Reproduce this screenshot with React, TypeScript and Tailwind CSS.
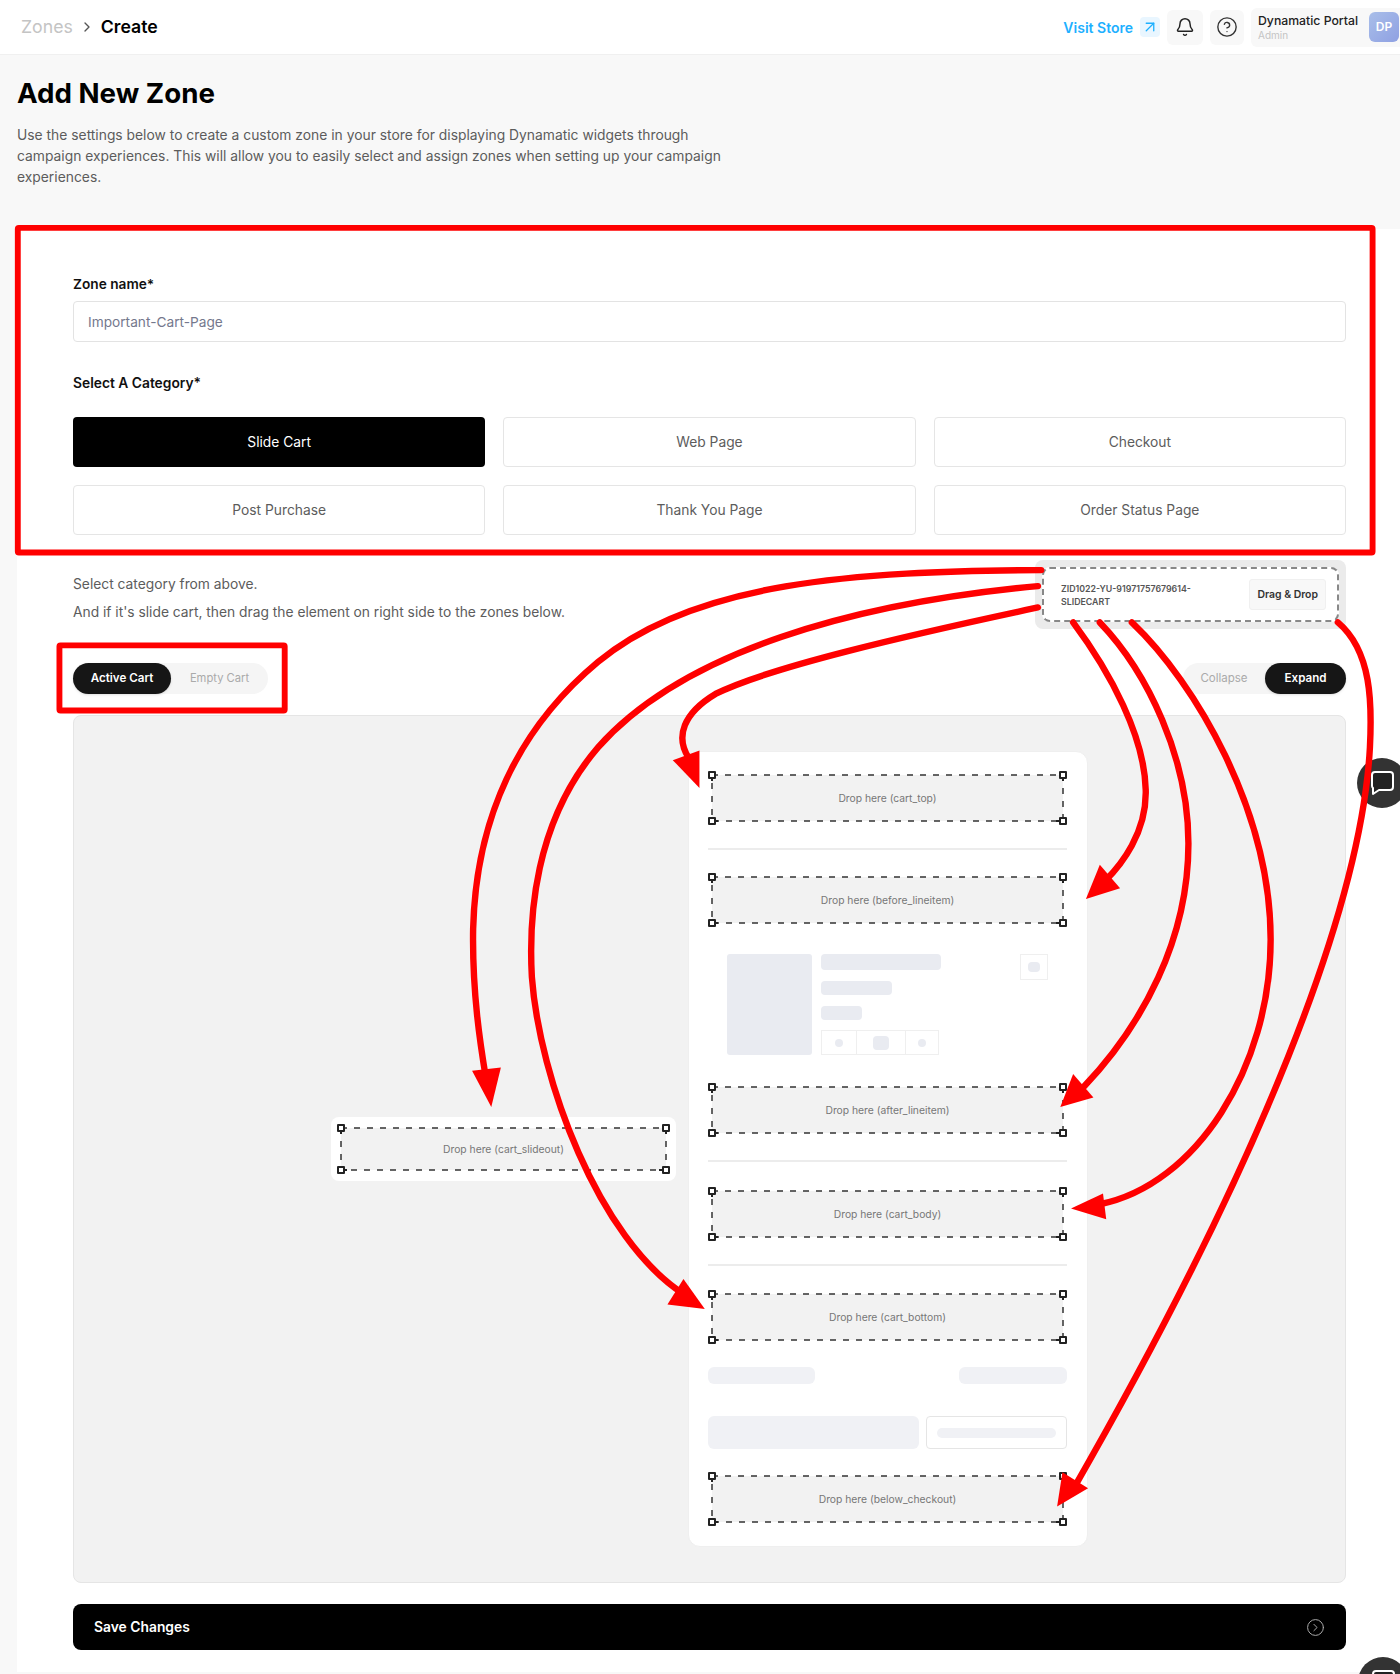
import React from "react";
import { ArrowUpRight, Bell, ChevronRight, CircleChevronRight, CircleHelp } from "lucide-react";

function Handle({ className, tail }: { className: string; tail: string }) {
  return (
    <span className={`absolute w-[8px] h-[8px] border-2 border-[#222] bg-white rounded-[1px] ${className}`}>
      <span className={`absolute bg-[#222] ${tail}`}></span>
    </span>
  );
}

function DropZone({ name, height = "h-[46px]" }: { name: string; height?: string }) {
  return (
    <div className={`relative ${height} mx-1 bg-[#f2f2f2] flex items-center justify-center text-[10.3px] text-[#777]`}>
      <svg className="absolute inset-0 w-full h-full overflow-visible" fill="none">
        <rect x="0" y="0" width="100%" height="100%" stroke="#333" strokeWidth="1.5" strokeDasharray="6 7" />
      </svg>
      <Handle className="-top-[4px] -left-[4px]" tail="top-[4px] left-[1px] w-[1.5px] h-[4px]" />
      <Handle className="-top-[4px] -right-[4px]" tail="top-[4px] left-[1px] w-[1.5px] h-[4px]" />
      <Handle className="-bottom-[4px] -left-[4px]" tail="top-[1px] left-[4px] w-[4px] h-[1.5px]" />
      <Handle className="-bottom-[4px] -right-[4px]" tail="top-[1px] -left-[5px] w-[4px] h-[1.5px]" />
      <span className="relative">Drop here ({name})</span>
    </div>
  );
}

function Divider({ className }: { className: string }) {
  return <div className={`h-[2px] bg-[#ececec] ${className}`}></div>;
}

function CategoryButton({ label, active }: { label: string; active?: boolean }) {
  return (
    <button className={`h-[50px] rounded-[4px] text-[13.8px] ${active ? "bg-black text-white" : "bg-white text-[#5c5c5c] border border-[#e5e5e5]"}`}>
      {label}
    </button>
  );
}

function ChatBubble({ className }: { className: string }) {
  return (
    <div className={`absolute w-[50px] h-[50px] rounded-full bg-[#333] flex items-center justify-center ${className}`}>
      <svg width="26" height="26" viewBox="0 0 26 26" fill="#222" stroke="white" strokeWidth="2" strokeLinejoin="round">
        <path d="M6 2h15a3 3 0 0 1 3 3v12a3 3 0 0 1-3 3H10l-6 4 0-6a3 3 0 0 1-1-2V5a3 3 0 0 1 3-3z" />
      </svg>
    </div>
  );
}

function Annotations() {
  const line = { fill: "none", stroke: "#ff0000", strokeWidth: 6, strokeLinecap: "round" as const };
  return (
    <svg className="absolute top-0 left-0 w-[1400px] h-[1674px] pointer-events-none" viewBox="0 0 1311 1568">
      <rect x="16.5" y="213.5" width="1269" height="304" rx="1" fill="none" stroke="#ff0000" strokeWidth="5.5" />
      <rect x="55.5" y="604.5" width="211" height="61" rx="1" fill="none" stroke="#ff0000" strokeWidth="5.5" />
      <path {...line} d="M975 534C800 535 650 545 560 620C470 695 445 790 443 870C442 930 450 980 455 1010" />
      <polygon fill="#ff0000" points="460,1037 442,1003 469,1000" />
      <path {...line} d="M972 549C800 565 640 610 560 700C500 770 495 860 498 915C505 1010 560 1160 640 1212" />
      <polygon fill="#ff0000" points="660,1226 625,1222 640,1198" />
      <path {...line} d="M972 569C850 595 720 625 670 650C640 668 632 690 645 710" />
      <polygon fill="#ff0000" points="655,738 630,712 655,703" />
      <path {...line} d="M1005 583C1040 630 1072 690 1073 740C1074 780 1050 810 1035 825" />
      <polygon fill="#ff0000" points="1017,842 1030,810 1049,832" />
      <path {...line} d="M1030 583C1075 630 1113 710 1113 790C1113 880 1070 960 1015 1018" />
      <polygon fill="#ff0000" points="993,1037 1005,1006 1024,1028" />
      <path {...line} d="M1060 583C1120 640 1190 760 1190 880C1190 1000 1120 1110 1030 1128" />
      <polygon fill="#ff0000" points="1003,1132 1033,1118 1036,1142" />
      <path {...line} d="M1253 583C1285 610 1285 660 1283 700C1275 850 1180 1090 1005 1395" />
      <polygon fill="#ff0000" points="990,1411 995,1379 1019,1394" />
    </svg>
  );
}

export default function App() {
  return (
    <div className="relative h-[1674px] overflow-hidden bg-[#f8f8f8] font-['Inter',sans-serif]">
      <header className="h-[55px] bg-white border-b border-[#f0f0f0] flex items-center justify-between pl-[21px]">
        <div className="flex items-center text-[17.7px]">
          <span className="text-[#c4c4c4]">Zones</span>
          <ChevronRight className="w-4 h-4 mx-[6px] text-[#555]" />
          <span className="font-semibold text-black">Create</span>
        </div>
        <div className="flex items-center">
          <span className="text-[14px] font-semibold text-[#1eb0ff]">Visit Store</span>
          <div className="ml-[7px] w-5 h-5 rounded-[4px] bg-[#e9f6ff] flex items-center justify-center">
            <ArrowUpRight className="w-[18px] h-[18px] text-[#1eb0ff]" strokeWidth={1.75} />
          </div>
          <div className="ml-[7px] w-9 h-[35px] rounded-md bg-[#f8f8f8] flex items-center justify-center">
            <Bell className="w-5 h-5 text-[#222]" strokeWidth={1.75} />
          </div>
          <div className="ml-[7px] w-[34px] h-[35px] rounded-md bg-[#f8f8f8] flex items-center justify-center">
            <CircleHelp className="w-[22px] h-[22px] text-[#333]" strokeWidth={1.5} />
          </div>
          <div className="ml-[7px] w-[149px] h-[39px] rounded-l-md bg-[#f8f8f8] flex items-center pl-[7px]">
            <div className="w-[111px]">
              <div className="text-[12.25px] leading-4 font-medium text-[#222]">Dynamatic Portal</div>
              <div className="text-[10px] leading-3 text-[#c4c4c4]">Admin</div>
            </div>
            <div className="w-[30px] h-[30px] rounded-md bg-gradient-to-br from-[#a9bee9] to-[#8fa0e2] flex items-center justify-center text-[12px] font-semibold text-white">DP</div>
          </div>
        </div>
      </header>

      <section className="pl-[17px] pt-[20px]">
        <h1 className="text-[27.7px] leading-9 font-bold text-black">Add New Zone</h1>
        <p className="mt-[14px] w-[720px] text-[13.85px] leading-[20.8px] text-[#5c5c5c]">
          Use the settings below to create a custom zone in your store for displaying Dynamatic widgets through campaign experiences. This will allow you to easily select and assign zones when setting up your campaign experiences.
        </p>
      </section>

      <main className="ml-[17px] mt-[42px] bg-white pt-[46px] pl-[56px] pr-[54px] pb-[22px] rounded-tl-lg">
        <label className="block text-[13.7px] leading-[18px] font-semibold text-[#111]">Zone name*</label>
        <div className="mt-[8px] h-[41px] rounded-[4px] border border-[#e3e3e3] flex items-center px-[14px] text-[13.7px] text-[#74788d]">Important-Cart-Page</div>
        <label className="block mt-[32px] text-[13.8px] leading-[18px] font-semibold text-[#111]">Select A Category*</label>
        <div className="mt-[25px] grid grid-cols-3 gap-x-[18px] gap-y-[18px]">
          <CategoryButton label="Slide Cart" active />
          <CategoryButton label="Web Page" />
          <CategoryButton label="Checkout" />
          <CategoryButton label="Post Purchase" />
          <CategoryButton label="Thank You Page" />
          <CategoryButton label="Order Status Page" />
        </div>

        <div className="mt-[25px] flex items-start justify-between">
          <div className="pt-[14px] text-[13.8px] leading-5 text-[#5c5c5c]">
            <p>Select category from above.</p>
            <p className="mt-2">And if it's slide cart, then drag the element on right side to the zones below.</p>
          </div>
          <div className="w-[311px] h-[69px] rounded-lg bg-[#ebebeb] p-[7px]">
            <div className="h-full rounded-lg border-2 border-dashed border-[#888] bg-white flex items-center justify-between pl-[17px] pr-[11px]">
              <span className="w-[160px] text-[8.8px] leading-[13px] font-semibold text-[#555]">ZID1022-YU-91971757679614-SLIDECART</span>
              <span className="h-[31px] px-[7px] rounded-[3px] bg-[#f8f8f8] border border-[#f0f0f0] flex items-center text-[10.45px] font-semibold text-[#333]">Drag &amp; Drop</span>
            </div>
          </div>
        </div>

        <div className="mt-[34px] flex items-center justify-between">
          <div className="flex w-[195px] h-[31px] rounded-full bg-[#f5f5f5]">
            <span className="w-[98px] rounded-full bg-[#161616] text-[11.6px] text-white font-semibold flex items-center justify-center shadow">Active Cart</span>
            <span className="flex-1 flex items-center justify-center text-[11.2px] text-[#aaa]">Empty Cart</span>
          </div>
          <div className="flex w-[163px] h-[31px] rounded-full bg-[#f5f5f5]">
            <span className="flex-1 flex items-center justify-center text-[11.5px] text-[#aaa]">Collapse</span>
            <span className="w-[81px] rounded-full bg-[#161616] text-[11.6px] text-white font-semibold flex items-center justify-center shadow">Expand</span>
          </div>
        </div>

        <div className="mt-[21px] rounded-lg border border-[#e5e5e5] bg-[#f2f2f2] py-[35px] flex items-center justify-center gap-3">
          <div className="w-[345px] h-[64px] rounded-lg bg-white flex flex-col justify-center px-[6px]">
            <DropZone name="cart_slideout" height="h-[42px]" />
          </div>

          <div className="w-[400px] rounded-xl bg-white border border-[#efefef] pl-[19px] pr-[20px] pt-[23px] pb-[24px]">
            <DropZone name="cart_top" />
            <Divider className="mt-[27px]" />
            <div className="mt-[27px]"><DropZone name="before_lineitem" /></div>
            <div className="mt-[31px] pl-[19px] pr-[19px] flex justify-between">
              <div className="flex gap-[9px]">
                <div className="w-[85px] h-[101px] rounded-[3px] bg-[#e9ebf1]"></div>
                <div>
                  <div className="w-[120px] h-[16px] rounded-[4px] bg-[#e9ebf1]"></div>
                  <div className="mt-[11px] w-[71px] h-[14px] rounded-[4px] bg-[#e9ebf1]"></div>
                  <div className="mt-[11px] w-[41px] h-[14px] rounded-[4px] bg-[#e9ebf1]"></div>
                  <div className="mt-[10px] w-[118px] h-[25px] border border-[#efefef] flex">
                    <div className="w-[34px] flex items-center justify-center"><span className="w-2 h-2 rounded-full bg-[#e9ebf1]"></span></div>
                    <div className="w-[50px] border-x border-[#efefef] flex items-center justify-center"><span className="w-4 h-[14px] rounded-[4px] bg-[#e9ebf1]"></span></div>
                    <div className="flex-1 flex items-center justify-center"><span className="w-2 h-2 rounded-full bg-[#e9ebf1]"></span></div>
                  </div>
                </div>
              </div>
              <div className="w-[28px] h-[26px] border border-[#efefef] flex items-center justify-center">
                <span className="w-3 h-[10px] rounded-[4px] bg-[#e9ebf1]"></span>
              </div>
            </div>
            <div className="mt-[32px]"><DropZone name="after_lineitem" /></div>
            <Divider className="mt-[27px]" />
            <div className="mt-[29px]"><DropZone name="cart_body" /></div>
            <Divider className="mt-[27px]" />
            <div className="mt-[28px]"><DropZone name="cart_bottom" /></div>
            <div className="mt-[27px] flex justify-between">
              <div className="w-[107px] h-[17px] rounded-md bg-[#f0f1f5]"></div>
              <div className="w-[108px] h-[17px] rounded-md bg-[#f0f1f5]"></div>
            </div>
            <div className="mt-[32px] flex justify-between">
              <div className="w-[211px] h-[33px] rounded-md bg-[#f0f1f5]"></div>
              <div className="w-[141px] h-[33px] rounded-[4px] border border-[#e5e5e5] flex items-center justify-center">
                <span className="w-[119px] h-[10px] rounded-full bg-[#f0f1f5]"></span>
              </div>
            </div>
            <div className="mt-[27px]"><DropZone name="below_checkout" /></div>
          </div>
        </div>

        <button className="mt-[21px] w-full h-[46px] rounded-lg bg-black flex items-center justify-between pl-[21px] pr-[21px] text-[13.85px] font-semibold text-white">
          Save Changes
          <CircleChevronRight className="w-[19px] h-[19px] text-[#aaa]" strokeWidth={1.25} />
        </button>
      </main>

      <ChatBubble className="left-[1357px] top-[758px]" />
      <ChatBubble className="left-[1358px] top-[1657px]" />
      <Annotations />
    </div>
  );
}
